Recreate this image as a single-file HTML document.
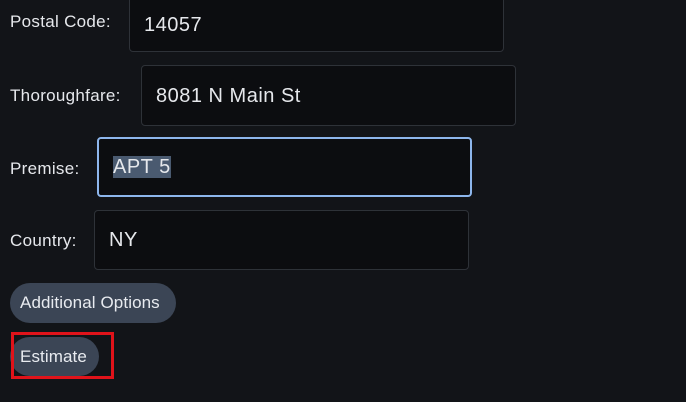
<!DOCTYPE html><html><head><style>
body{margin:0;width:686px;height:402px;background:#121418;font-family:"Liberation Sans",Roboto,sans-serif;color:#e6e8ec;position:relative;overflow:hidden}
.l{position:absolute;left:10px;font-size:17px;line-height:20px;letter-spacing:0.3px}
.i{position:absolute;background:#0c0d10;border:1px solid #2e3238;border-radius:4px;box-sizing:border-box;font-size:20px;line-height:22px;padding-left:14px;display:flex;align-items:center;letter-spacing:0.5px}
.b{position:absolute;left:10px;background:#3b4555;border-radius:20px;font-size:17px;color:#e8ebf0;display:flex;align-items:center;box-sizing:border-box;padding-left:10px;letter-spacing:0.1px}
</style></head><body>
<div class="l" style="top:12px">Postal Code:</div>
<div class="i" style="left:129px;top:-8px;width:375px;height:60px"><span style="position:relative;top:3px">14057</span></div>
<div class="l" style="top:86px">Thoroughfare:</div>
<div class="i" style="left:141px;top:65px;width:375px;height:61px">8081 N Main St</div>
<div class="l" style="top:159px">Premise:</div>
<div class="i" style="left:97px;top:137px;width:375px;height:60px;border:2px solid #8db6ec;padding-left:14px"><span style="background:#4a5a70">APT 5</span></div>
<div class="l" style="top:231px">Country:</div>
<div class="i" style="left:94px;top:210px;width:375px;height:60px">NY</div>
<div class="b" style="top:283px;width:166px;height:40px">Additional Options</div>
<div class="b" style="top:337px;width:89px;height:39px">Estimate</div>
<div style="position:absolute;left:11px;top:332px;width:103px;height:47px;border:3px solid #e0131a;box-sizing:border-box"></div>
</body></html>
